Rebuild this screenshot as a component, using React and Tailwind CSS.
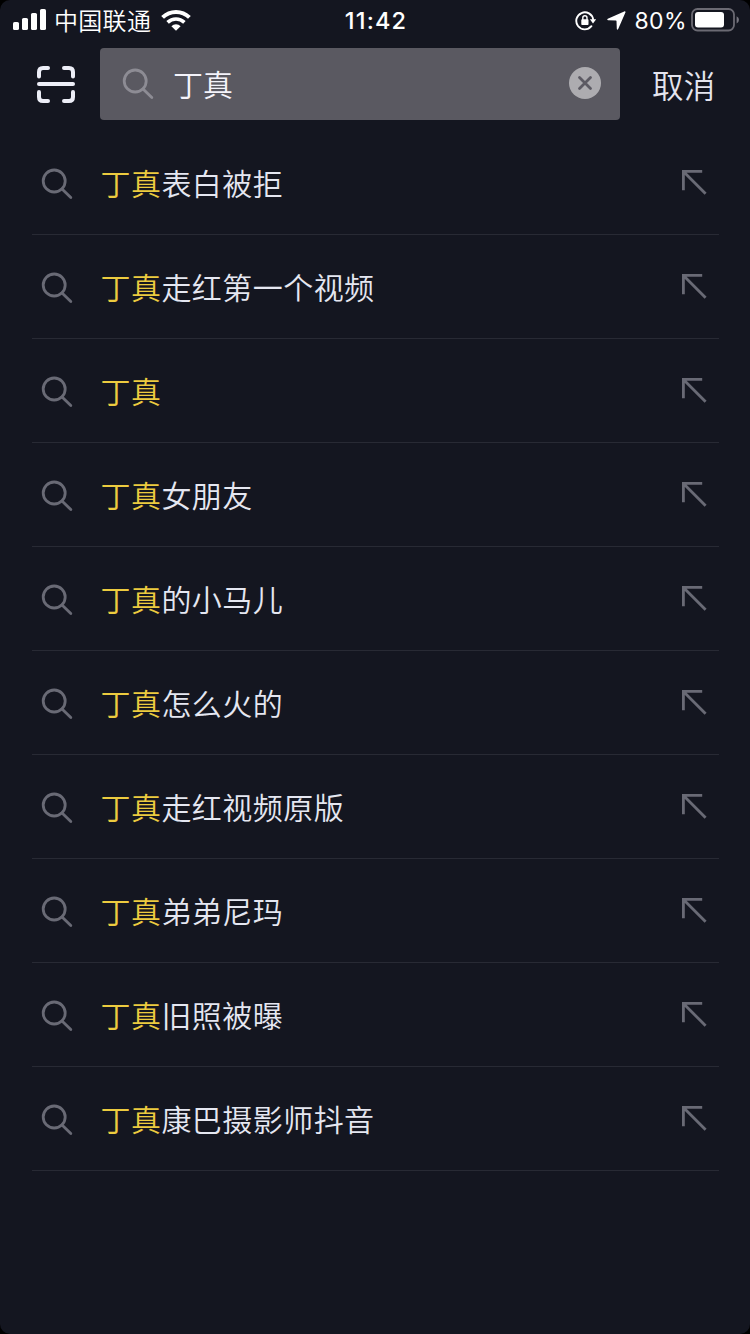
const KEYWORD = "丁真";

const suggestions = [
  "表白被拒",
  "走红第一个视频",
  "",
  "女朋友",
  "的小马儿",
  "怎么火的",
  "走红视频原版",
  "弟弟尼玛",
  "旧照被曝",
  "康巴摄影师抖音",
];

function SearchIcon({ className }) {
  return (
    <svg viewBox="0 0 32 32" fill="none" stroke="currentColor" strokeWidth="2.8" className={className}>
      <circle cx="13.2" cy="13" r="11" />
      <path d="M21 21L29.8 29.6" strokeLinecap="round" />
    </svg>
  );
}

function StatusBar() {
  return (
    <div className="flex h-12 justify-between text-white">
      <div className="flex w-[300px] pl-[13px]">
        <svg viewBox="0 0 33 22" fill="currentColor" className="mt-[9px] h-[22px] w-[33px] shrink-0">
          <rect x="0" y="13" width="6" height="8" rx="1.6" />
          <rect x="9" y="9" width="6" height="12" rx="1.6" />
          <rect x="18" y="4" width="6" height="17" rx="1.6" />
          <rect x="27" y="0" width="6" height="21" rx="1.6" />
        </svg>
        <span className="ml-2 h-10 text-[24px] leading-10 font-[350] tracking-[0.3px] whitespace-nowrap">中国联通</span>
        <svg viewBox="0 0 30 22" fill="none" className="mt-[9px] ml-[10px] h-[22px] w-[30px] shrink-0">
          <path d="M1.6 8.4A19.2 19.2 0 0 1 28.4 8.4" stroke="currentColor" strokeWidth="4" />
          <path d="M6.6 13.4A12.2 12.2 0 0 1 23.4 13.4" stroke="currentColor" strokeWidth="3.6" />
          <path d="M10.4 17.2A6.5 6.5 0 0 1 19.6 17.2L15 21.8Z" fill="currentColor" />
        </svg>
      </div>

      <span className="ml-[2px] font-['Inter','Liberation_Sans',sans-serif] text-[23.5px] leading-[42px] font-medium tracking-[1.2px]">11:42</span>

      <div className="flex w-[300px] justify-end pr-[11px]">
        <svg viewBox="0 0 22 20" fill="none" stroke="currentColor" className="mt-[11px] h-5 w-[22px] shrink-0">
          <path d="M18.2 8.6A8.5 8.5 0 1 0 16.4 15.2" strokeWidth="1.9" strokeLinecap="round" />
          <path d="M14.9 8.2H21.2L18 12.4Z" fill="currentColor" stroke="none" />
          <rect x="6.3" y="8.2" width="7.2" height="5.8" rx="0.8" fill="currentColor" stroke="none" />
          <path d="M7.8 9V6.9A2.1 2.1 0 0 1 12 6.9V9" strokeWidth="1.4" />
        </svg>
        <svg viewBox="0 0 19 19" fill="currentColor" className="mt-[11px] ml-[10px] h-[19px] w-[19px] shrink-0">
          <path d="M17.2 0.4C18.2 0 18.8 0.6 18.4 1.6L11.2 18Q10.4 19.4 9.8 18L9.5 10.1Q9.5 9.5 8.9 9.5L1 9.2Q-0.6 8.7 0.8 7.8Z" />
        </svg>
        <span className="ml-2 font-['Inter','Liberation_Sans',sans-serif] text-[23px] leading-[42px] tracking-[0.4px]">80%</span>
        <svg viewBox="0 0 48 24" fill="none" className="mt-2 ml-1 h-6 w-12 shrink-0">
          <rect x="1" y="1" width="42" height="21.5" rx="5.5" stroke="#6b6a73" strokeWidth="1.8" />
          <rect x="4" y="4" width="29" height="15.5" rx="3" fill="white" />
          <path d="M45.6 8.2Q48 9.3 48 11.8T45.6 15.4Z" fill="#77767f" />
        </svg>
      </div>
    </div>
  );
}

function SearchHeader() {
  return (
    <div className="flex h-[72px] items-center">
      <svg viewBox="0 0 38 38" fill="none" stroke="#edeef7" strokeWidth="4" strokeLinecap="round" className="mt-[2px] ml-[37px] h-[38px] w-[38px] shrink-0">
        <path d="M2 10.5V6Q2 2 6 2H11M27 2H32Q36 2 36 6V10.5M36 26V31Q36 35 32 35H27M11 35H6Q2 35 2 31V26" />
        <path d="M2 18H36" />
      </svg>
      <div className="ml-[25px] flex h-[72px] w-[520px] shrink-0 items-center rounded bg-[#5a5961] pr-[19px] pl-[22px]">
        <SearchIcon className="h-8 w-8 shrink-0 text-[#8d8c94]" />
        <span className="ml-[19px] h-[72px] flex-1 text-[30px] leading-[70px] font-[350] text-[#f4f3fa]">{KEYWORD}</span>
        <svg viewBox="0 0 32 32" className="mb-[3px] h-8 w-8 shrink-0">
          <circle cx="16" cy="16" r="16" fill="#adacb0" />
          <path d="M10.5 10.5L21.5 21.5M21.5 10.5L10.5 21.5" stroke="#5c5a63" strokeWidth="2.8" strokeLinecap="round" />
        </svg>
      </div>
      <button className="ml-8 h-[72px] text-[31.5px] leading-[68px] font-[350] tracking-[0.3px] whitespace-nowrap text-[#e4e5ef]">取消</button>
    </div>
  );
}

function SuggestionRow({ rest }) {
  return (
    <li className="flex h-[104px] items-center border-b border-[#282a34] pr-[11px] pl-[9px]">
      <SearchIcon className="mt-[2px] h-8 w-8 shrink-0 text-[#696a75]" />
      <span className="mb-[2px] ml-[27.5px] flex-1 text-[30px] leading-[44px] font-[350] tracking-[0.45px] whitespace-nowrap text-[#e5e7f1]">
        <span className="text-[#eccb3f]">{KEYWORD}</span>
        {rest}
      </span>
      <svg viewBox="0 0 26 26" fill="none" stroke="#696a75" strokeWidth="2.8" className="mt-[1px] h-[26px] w-[26px] shrink-0">
        <path d="M1.4 20.2V1.4H20.2M1.4 1.4L23.6 23.8" />
      </svg>
    </li>
  );
}

export default function App() {
  return (
    <div className="h-[1334px] w-[750px] bg-black font-['Noto_Sans_CJK_SC',sans-serif]">
      <div className="h-full overflow-hidden rounded-[10px] bg-[#141620]">
        <StatusBar />
        <SearchHeader />
        <ul className="mr-[31px] ml-8 pt-[11px]">
          {suggestions.map((rest) => (
            <SuggestionRow key={rest} rest={rest} />
          ))}
        </ul>
      </div>
    </div>
  );
}
